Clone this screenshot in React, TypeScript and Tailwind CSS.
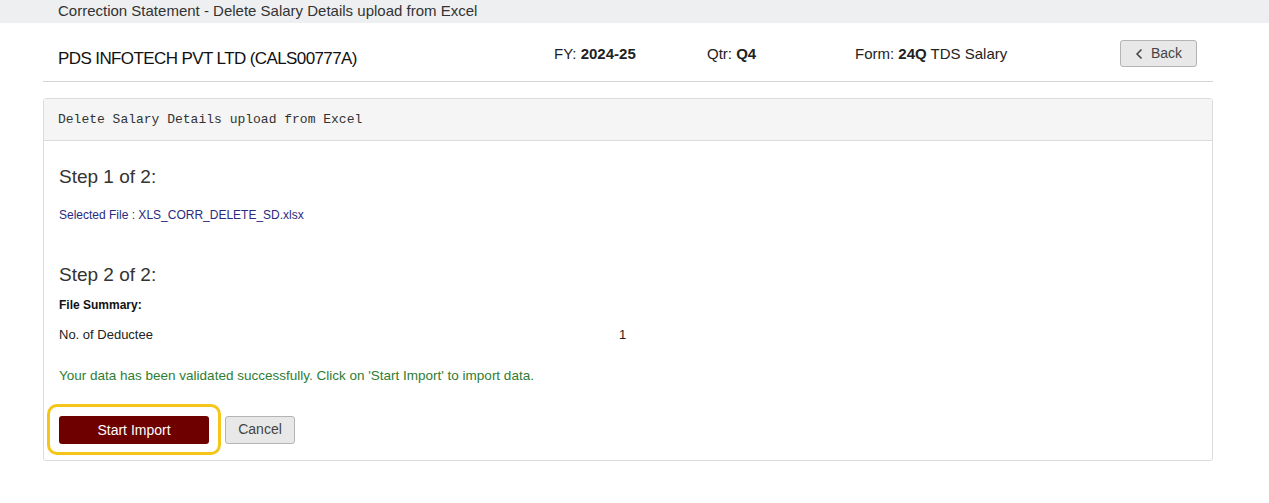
import { ChevronLeft } from 'lucide-react'

const SANS = 'font-["Segoe_UI","Liberation_Sans",Arial,sans-serif]'

export default function App() {
  return (
    <div className={`min-h-[503px] w-full bg-white text-[#333] ${SANS}`}>
      <div className="flex h-[23px] items-center bg-[#eeeff1] pl-[58px] text-[15px] text-[#333]">
        Correction Statement - Delete Salary Details upload from Excel
      </div>

      <div className="ml-[43px] mr-[56px]">
        <div className="flex h-[59px] items-start border-b border-[#d6d6d6] px-[15px]">
          <div className="mt-[24px] w-[496px] text-[17px] leading-[24px] tracking-[-0.6px] text-[#111]">
            PDS INFOTECH PVT LTD (CALS00777A)
          </div>
          <div className="mt-[21px] w-[153px] text-[15px] leading-[20px] text-[#222]">
            FY: <span className="font-bold">2024-25</span>
          </div>
          <div className="mt-[21px] w-[148px] text-[15px] leading-[20px] text-[#222]">
            Qtr: <span className="font-bold">Q4</span>
          </div>
          <div className="mt-[21px] text-[15px] leading-[20px] text-[#222]">
            Form: <span className="font-bold">24Q</span> TDS Salary
          </div>
          <button className="ml-auto mr-[1px] mt-[17px] flex h-[27px] w-[77px] items-center justify-center gap-[4px] rounded-[3px] border border-[#b4b4b4] bg-[#e8e8e8] text-[14px] text-[#444]">
            <ChevronLeft size={16} strokeWidth={2.5} className="-ml-[4px]" />
            Back
          </button>
        </div>

        <div className="mt-[16px] rounded-[3px] border border-[#dcdcdc]">
          <div className="flex h-[42px] items-center border-b border-[#dcdcdc] bg-[#f5f5f5] pl-[14px] font-['Liberation_Mono',monospace] text-[13px] text-[#333]">
            Delete Salary Details upload from Excel
          </div>

          <div className="px-[15px] pb-[5px] pt-[24px]">
            <div className="text-[19px] leading-[24px] text-[#333]">Step 1 of 2:</div>
            <div className="mt-[17px] text-[12px] leading-[18px] text-[#2a2a80]">Selected File : XLS_CORR_DELETE_SD.xlsx</div>

            <div className="mt-[39px] text-[19px] leading-[24px] text-[#333]">Step 2 of 2:</div>
            <div className="mt-[9px] text-[12px] font-bold leading-[18px] text-[#111]">File Summary:</div>
            <div className="mt-[12px] flex text-[13px] leading-[18px] text-[#222]">
              <div className="w-[560px]">No. of Deductee</div>
              <div>1</div>
            </div>
            <div className="mt-[23px] text-[13.5px] leading-[18px] text-[#2e7d32]">
              Your data has been validated successfully. Click on 'Start Import' to import data.
            </div>

            <div className="mt-[19px] flex items-center gap-[4px]">
              <div className="-ml-[12px] rounded-[10px] border-[3px] border-[#f5c518] px-[9px] pb-[8px] pt-[9px]">
                <button className="flex h-[28px] w-[150px] items-center justify-center rounded-[3px] bg-[#6e0000] text-[14px] text-white">
                  Start Import
                </button>
              </div>
              <button className="flex h-[28px] w-[70px] items-center justify-center rounded-[3px] border border-[#b4b4b4] bg-[#e8e8e8] text-[14px] text-[#444]">
                Cancel
              </button>
            </div>
          </div>
        </div>
      </div>
    </div>
  )
}
